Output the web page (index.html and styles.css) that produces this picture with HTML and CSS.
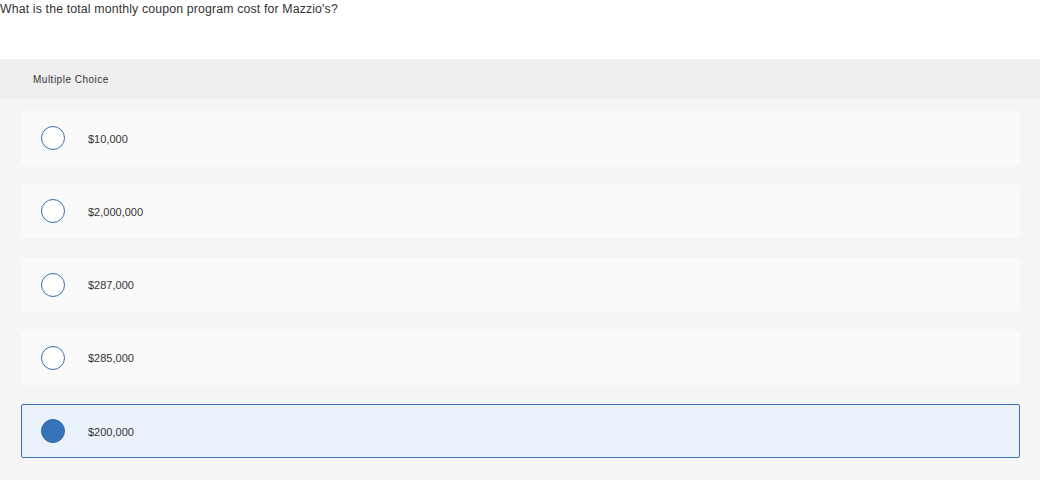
FILE: index.html
```html
<!DOCTYPE html>
<html>
<head>
<meta charset="utf-8">
<link rel="stylesheet" href="styles.css">
</head>
<body>
<div class="question">What is the total monthly coupon program cost for Mazzio's?</div>
<div class="quiz">
  <div class="quiz-head">Multiple Choice</div>
  <div class="options">
    <div class="option"><span class="radio"></span><span class="label">$10,000</span></div>
    <div class="option"><span class="radio"></span><span class="label">$2,000,000</span></div>
    <div class="option"><span class="radio"></span><span class="label">$287,000</span></div>
    <div class="option"><span class="radio"></span><span class="label">$285,000</span></div>
    <div class="option selected"><span class="radio"></span><span class="label">$200,000</span></div>
  </div>
</div>
</body>
</html>
```
FILE: styles.css
```css
html, body {
  margin: 0;
  padding: 0;
  background: #ffffff;
  font-family: "Liberation Sans", Arial, sans-serif;
  color: #333333;
}
.question {
  font-size: 12.3px;
  letter-spacing: 0.15px;
  line-height: 15px;
  padding-top: 2px;
  height: 57px;
  color: #333;
}
.quiz {
  background: #f5f5f5;
  height: 421px;
}
.quiz-head {
  background: #efefef;
  height: 40px;
  display: flex;
  align-items: center;
  padding-left: 33px;
  font-size: 10px;
  letter-spacing: 0.5px;
  color: #333;
}
.options {
  display: flex;
  flex-direction: column;
  gap: 19.25px;
  padding: 12px 20px 0 21px;
}
.option {
  height: 54px;
  box-sizing: border-box;
  background: #fafafa;
  border-radius: 2px;
  display: flex;
  align-items: center;
  padding-left: 19px;
  border: 1px solid transparent;
}
.option .radio {
  width: 24px;
  height: 24px;
  box-sizing: border-box;
  border-radius: 50%;
  border: 1px solid #3a6ea8;
  background: #fff;
  flex: none;
}
.option .label {
  margin-left: 23px;
  padding-top: 1px;
  font-size: 11px;
  color: #333;
}
.option.selected {
  background: #eaf2fb;
  border-color: #3b72b4;
}
.option.selected .radio {
  background: #3673b8;
  border-color: #3167a5;
}
```
